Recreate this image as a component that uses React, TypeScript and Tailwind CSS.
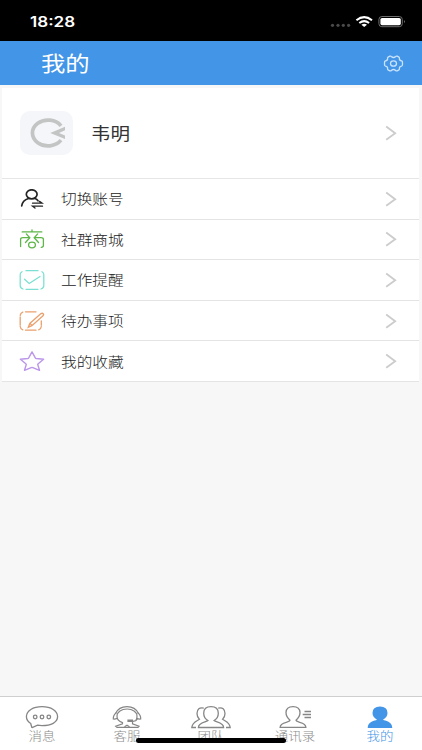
import type { ReactNode } from 'react';

const fontStack = "font-['Noto_Sans_CJK_SC','Noto_Sans',sans-serif]";

function Chevron() {
  return (
    <svg className="w-3 h-4 mr-[22px]" viewBox="0 0 12 16" fill="none" stroke="#cccccc" strokeWidth="1.8">
      <path d="M1.2 1.5 10.2 8.2l-9 6.500" />
    </svg>
  );
}

function StatusBar() {
  return (
    <div className="flex items-center justify-between h-[41px] pl-[30px] pr-[15px] bg-black">
      <span className="origin-left scale-x-[1.22] pt-[2px] font-['Inter',sans-serif] text-[14px] font-semibold leading-none text-white">
        18:28
      </span>
      <svg className="w-[77px] h-4 mt-[2px]" viewBox="0 0 77 16" fill="none">
        <g fill="#4a4a4a">
          <circle cx="2.5" cy="11.3" r="1.6" />
          <circle cx="8" cy="11.3" r="1.6" />
          <circle cx="13.3" cy="11.3" r="1.6" />
          <circle cx="18.6" cy="11.3" r="1.6" />
        </g>
        <g stroke="#fff" strokeWidth="2">
          <path d="M26.4 6.2q7.8-6.2 15.6 0" />
          <path d="M29.3 9q4.9-3.7 9.8 0" />
        </g>
        <path d="M31.4 10.7q2.8-2 5.6 0L34.2 13z" fill="#fff" />
        <rect x="48.9" y="2.5" width="23.4" height="10.2" rx="3" stroke="#6d6d6d" />
        <rect x="50.4" y="4" width="20.4" height="7.2" rx="1.6" fill="#fff" />
        <path d="M74 6q1.8 1.6 0 3.2z" fill="#8a8a8a" />
      </svg>
    </div>
  );
}

function Header() {
  return (
    <header className="flex items-center justify-between h-[44px] pl-[41px] pr-[18px] bg-[#4395e7]">
      <h1 className="pb-[2px] origin-left scale-x-[1.16] text-[21px] leading-none text-white">我的</h1>
      <svg className="w-[21px] h-[17px]" viewBox="0 0 21 17" fill="none" stroke="#c9e3fb" strokeWidth="1.3">
        <path d="M6.800 1.200q.900-.400 1.500.3 2.200 2 4.400 0 .6-.700 1.500-.300l1.700.900q.8.500.5 1.400-.2 2 2.100 2.400.9.200.9 1l.1 1.600-.1 1.600q0 .8-.9 1-2.300.4-2.100 2.400.3.900-.5 1.400l-1.700.9q-.9.400-1.500-.3-2.200-2-4.400 0-.6.700-1.500.3l-1.700-.9q-.8-.5-.5-1.400.2-2-2.100-2.400-.9-.2-.9-1l-.1-1.600.1-1.600q0-.8.900-1 2.300-.4 2.100-2.400-.3-.9.500-1.400z" />
        <ellipse cx="10.500" cy="8.500" rx="3" ry="2.700" />
      </svg>
    </header>
  );
}

function Profile() {
  return (
    <div className="flex items-center h-[91px] pl-[18px] bg-white border-b border-[#e6e6e6]">
      <div className="flex items-center justify-center w-[53px] h-[44px] rounded-[10px] bg-[#f5f6fa]">
        <svg className="w-9 h-[30px]" viewBox="0 0 36 30" fill="none">
          <path d="M32 7.800A15.600 12.900 0 1 0 32 22.200" stroke="#c3c5c4" strokeWidth="3.700" />
          <path d="M36.500 8.500 21.200 15l15.300 6.300V17.800L30 15l6.500-3z" fill="#c3c5c4" />
        </svg>
      </div>
      <span className="grow ml-[18px] pb-[2px] origin-left scale-x-[1.15] text-[17px] leading-none text-[#333]">
        韦明
      </span>
      <Chevron />
    </div>
  );
}

function Row({ label, icon }: { label: string; icon: ReactNode }) {
  return (
    <li className="flex items-center h-[40.6px] bg-white border-b border-[#e4e4e4]">
      <svg className="w-[26px] h-5 ml-[17px] shrink-0" viewBox="0 0 26 20" fill="none" strokeLinecap="round">
        {icon}
      </svg>
      <span className="w-[56px] ml-4 pb-[1px] origin-left scale-x-[1.12] text-[14px] font-light leading-none whitespace-nowrap text-[#222]">
        {label}
      </span>
      <div className="ml-auto">
        <Chevron />
      </div>
    </li>
  );
}

const rows = [
  {
    label: '切换账号',
    icon: (
      <g stroke="#252525" strokeWidth="1.700">
        <ellipse cx="12.700" cy="5.300" rx="5.400" ry="4.500" />
        <path d="M2.700 16.800q.7-5.300 6.900-7.300M16 9.500q2 .8 3 2.300" />
        <path d="M13.500 14.200H23l-2.500-1.800M23.500 17.200H13.500l2.500 1.900" strokeWidth="1.300" />
      </g>
    ),
  },
  {
    label: '社群商城',
    icon: (
      <g stroke="#5cb648" strokeWidth="1.300">
        <path d="M3.200 2.900h19.600M13 .8v2.100" />
        <path d="M1.600 17.500V10.500Q1.600 8.600 4 8.600h6.500M24.400 10.500v6q0 1.800-2.200 1.800M24.400 10.500q0-1.900-2.400-1.900h-6.500" />
        <path d="M7.300 4.900 10.800 8.700 6.500 13.500M18.700 4.900 15.200 8.700l4.300 4.800" />
        <ellipse cx="13" cy="16" rx="3.400" ry="2.800" />
      </g>
    ),
  },
  {
    label: '工作提醒',
    icon: (
      <g stroke="#7be0d2" strokeWidth="1.300">
        <path d="M7 .7h12M7 19.300h12M1.200 5.200v9.600M24.800 5.200v9.600M1.200 15.500q0 2.700 2.800 3.500M24.800 15.500q0 2.700-2.800 3.500M1.200 4.500Q1.200 2.800 3 1.700M24.800 4.500q0-1.700-1.800-2.800" />
        <path d="m5.500 9.300 4.700 4.200L21 6.500" />
      </g>
    ),
  },
  {
    label: '待办事项',
    icon: (
      <g stroke="#eaa06e" strokeWidth="1.300">
        <path d="M6.500.8H17M1.200 5.800v8.400M6.500 19.200H17M22.300 10v4.200M1.200 15.500q.3 2.600 2.600 3.400M22.300 15.500q-.3 2.600-2.600 3.400M1.200 4.300q.3-2.300 2.600-3.200" />
        <path d="m9.300 16.200 1.500-3.800L22 2.600q1.300-.8 2.200.1.900 1-.2 2L12.900 14.700zM11 12.500l2 1.900" />
      </g>
    ),
  },
  {
    label: '我的收藏',
    icon: (
      <path
        d="m13 .9 3.300 6q.3.500 1 .6l7.300.7-5.400 4.500q-.6.500-.4 1.100l1.700 5.500-6.700-2.700q-.8-.3-1.600 0l-6.700 2.700 1.700-5.500q.2-.6-.4-1.100L1.400 8.200l7.300-.7q.7-.1 1-.6z"
        stroke="#bb96ea"
        strokeWidth="1.400"
        strokeLinejoin="round"
      />
    ),
  },
];

const tabs = [
  {
    label: '消息',
    icon: (
      <g stroke="#868686" strokeWidth="1.300">
        <path d="M5.700 18.500q-4.300-2.600-4.300-6.900C1.400 5.700 8 1.700 17 1.700s15.600 4 15.600 9.900S26 20.600 17 20.600q-2.400 0-4.500-.4L7.200 22.600q-.6 0-.5-.6z" />
        <circle cx="10.200" cy="12" r="1.800" />
        <circle cx="17" cy="12" r="1.800" />
        <circle cx="23.800" cy="12" r="1.800" />
      </g>
    ),
  },
  {
    label: '客服',
    icon: (
      <g stroke="#868686" strokeWidth="1.200">
        <path d="M26 15.200q1-1.800 1-4C27 6.700 22.500 4 17 4S7 6.700 7 11.200c0 3.300 2.200 5.300 5.500 6.400v1.200l-6.800 2.400L7 22.300h21l1-1.100-6.500-2.400v-2" />
        <path d="M5.500 8.500C7.500 4.200 11.700 1.600 17 1.600s9.500 2.600 11.500 6.900" />
        <path d="M6.500 7.800Q3 10 3.300 14q2.200.2 4-.8M27.500 7.800q3.500 2.200 3.200 6.200-2.200.2-4-.8" />
        <path d="M27.500 14q-1.500 2.300-4.500 2.300h-5v-1.200h5M14.500 21.800l2.500-1.500 2.500 1.500" />
      </g>
    ),
  },
  {
    label: '团队',
    icon: (
      <g stroke="#868686" strokeWidth="1.300">
        <path d="M13.900 15.500q-4.200-2.500-4.200-7.300Q9.700 1.700 17 1.700t7.300 6.500q0 4.800-4.200 7.300c2 1.700 9.500 1.500 9.500 7H4.400c0-5.500 7.500-5.300 9.500-7z" />
        <path d="M9.800 3.100Q3.200 1.800 3 8.600q0 3.500 2.400 5.700C3.200 16-1.800 17-2.200 22.500H2M24.200 3.100Q30.800 1.800 31 8.600q0 3.500-2.400 5.700c2.200 1.700 7.200 2.700 7.600 8.200H32" />
      </g>
    ),
  },
  {
    label: '通讯录',
    icon: (
      <g stroke="#868686" strokeWidth="1.300">
        <path d="M12 15.200Q8 12 8 7.600 8.200 1.700 15 1.700t7 5.900q0 4.400-4 7.600c.5 3 9.700 1 9.900 7.200H2.100C2.300 16.200 11.500 18.200 12 15.200z" />
        <path d="M26.500 6.500H33M24.700 9.500H33M26.500 12.500H33" />
      </g>
    ),
  },
  {
    label: '我的',
    active: true,
    icon: (
      <path
        d="M14 14.700Q9.500 12.200 9.500 8 9.500 1.500 17 1.500T24.500 8q0 4.200-4.500 6.700c2 1.300 9.300 1.300 9.300 8.300H4.700c0-7 7.300-7 9.300-8.300z"
        fill="#4395e7"
      />
    ),
  },
];

export default function App() {
  return (
    <div className={`relative flex flex-col w-[422px] h-[750px] overflow-hidden bg-[#f7f7f7] ${fontStack}`}>
      <StatusBar />
      <Header />
      <main className="grow pt-[3px] pl-[2px] pr-[3px]">
        <Profile />
        <ul>
          {rows.map((row) => (
            <Row key={row.label} label={row.label} icon={row.icon} />
          ))}
        </ul>
      </main>
      <nav className="flex h-[54px] bg-white border-t border-[#cfcfcf]">
        {tabs.map((tab) => (
          <div key={tab.label} className="flex flex-col items-center flex-1 pt-2">
            <svg className="w-[34px] h-6 overflow-visible" viewBox="0 0 34 24" fill="none">
              {tab.icon}
            </svg>
            <span
              className={`mt-[1px] scale-x-[1.12] text-[12px] font-light leading-none ${tab.active ? 'text-[#4395e7]' : 'text-[#8c8c8c]'}`}
            >
              {tab.label}
            </span>
          </div>
        ))}
      </nav>
      <div className="absolute left-[136px] bottom-[7px] w-[150px] h-[5px] rounded-full bg-black" />
    </div>
  );
}
